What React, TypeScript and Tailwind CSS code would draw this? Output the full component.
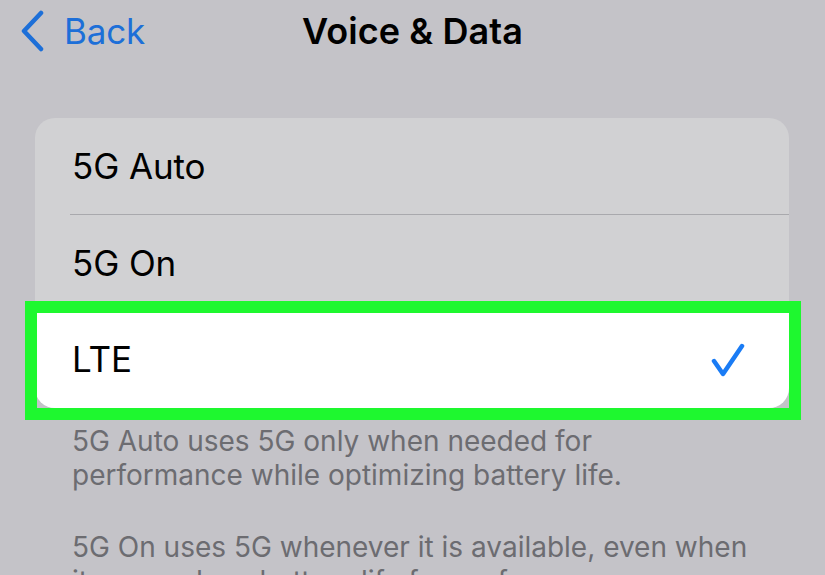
const rows = ["5G Auto", "5G On"];

const App = () => {
  return (
    <div className="w-[825px] h-[575px] overflow-hidden bg-[#c4c3c8] font-['Inter',sans-serif]">
      {/* nav bar */}
      <div className="relative flex items-center h-[62px]">
        <div className="flex items-center pl-[20px] text-[#1d6fd8]">
          <svg width="26" height="42" viewBox="0 0 26 42" fill="none">
            <path
              d="M21 3 L4 21 L21 39"
              stroke="currentColor"
              strokeWidth="4.5"
              strokeLinecap="round"
              strokeLinejoin="round"
            />
          </svg>
          <span className="ml-[18px] text-[35px] tracking-[-0.2px]">Back</span>
        </div>
        <h1 className="absolute left-0 right-0 text-center text-[36px] font-semibold text-black tracking-[0.1px]">
          Voice &amp; Data
        </h1>
      </div>

      {/* options card */}
      <div className="mt-[56px] ml-[35px] w-[754px] rounded-[20px] bg-[#d1d1d3]">
        {rows.map((label, i) => (
          <div key={label}>
            <div className="flex items-center h-[96px] pl-[37px] text-[35px] text-black tracking-[-0.1px]">
              {label}
            </div>
            {i === 0 && <div className="ml-[35px] h-px bg-[#a9a9ad]" />}
          </div>
        ))}
        <div className="relative flex items-center justify-between h-[97px] pl-[37px] pr-[44px] bg-white rounded-b-[20px] text-[35px] text-black">
          <span>LTE</span>
          <svg width="34" height="34" viewBox="0 0 34 34" fill="none">
            <path
              d="M3 18 L12 31 L31 3"
              stroke="#1a7cf5"
              strokeWidth="4.5"
              strokeLinecap="round"
              strokeLinejoin="round"
            />
          </svg>
          <div className="absolute -left-[10px] -right-[12px] -top-[10px] -bottom-[12px] border-[12px] border-[#1ef82f]" />
        </div>
      </div>

      {/* footer notes */}
      <div className="mt-[16px] pl-[72px] pr-[20px] text-[28px] leading-[34px] text-[#6c6c71]">
        <p>
          5G Auto uses 5G only when needed for
          <br />
          performance while optimizing battery life.
        </p>
        <p className="mt-[38px]">
          5G On uses 5G whenever it is available, even when
          <br />
          it may reduce battery life for performance.
        </p>
      </div>
    </div>
  );
};

export default App;
